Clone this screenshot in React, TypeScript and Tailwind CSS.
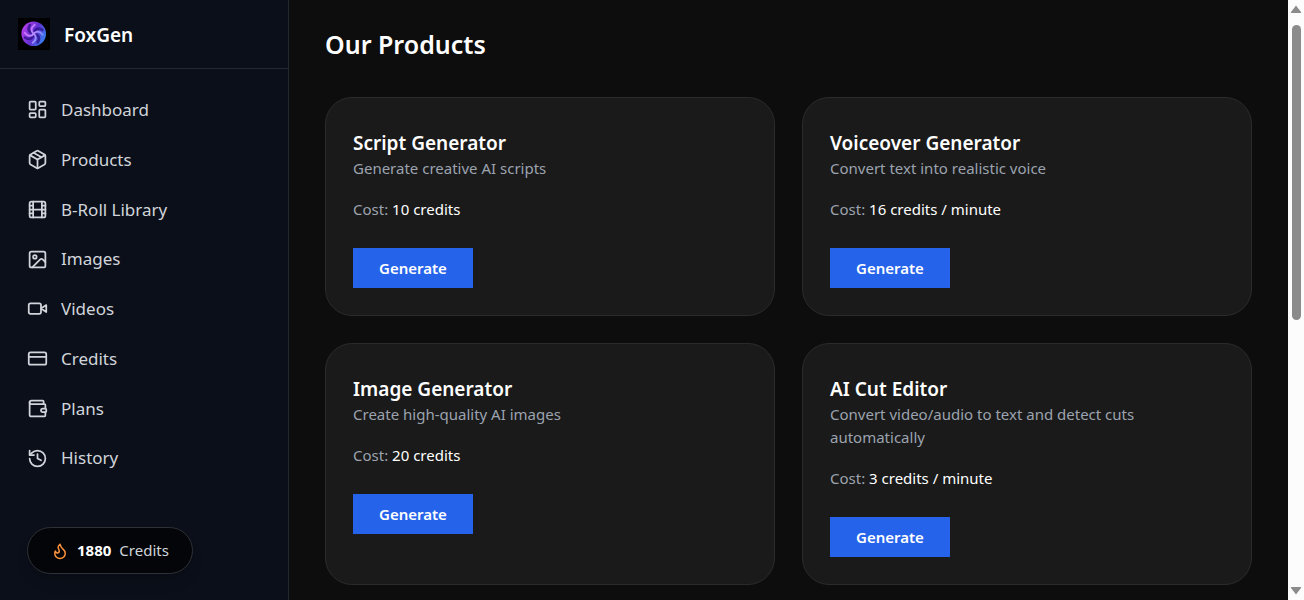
import {
  CreditCard,
  Film,
  Flame,
  History,
  Image,
  LayoutDashboard,
  Package,
  Wallet,
} from "lucide-react";

// Camera with a pointed lens
const VideoIcon = ({ size = 24 }: { size?: number }) => (
  <svg width={size} height={size} viewBox="0 0 24 24" fill="none" stroke="currentColor" strokeWidth="2" strokeLinecap="round" strokeLinejoin="round" aria-hidden="true">
    <path d="m22 8-6 4 6 4V8Z" />
    <rect x="2" y="6" width="14" height="12" rx="2" />
  </svg>
);

const links = [
  { name: "Dashboard", href: "#dashboard", icon: LayoutDashboard },
  { name: "Products", href: "#products", icon: Package },
  { name: "B-Roll Library", href: "#b-roll", icon: Film },
  { name: "Images", href: "#images", icon: Image },
  { name: "Videos", href: "#videos", icon: VideoIcon },
  { name: "Credits", href: "#credits", icon: CreditCard },
  { name: "Plans", href: "#plans", icon: Wallet },
  { name: "History", href: "#history", icon: History },
];

const products = [
  { title: "Script Generator", description: "Generate creative AI scripts", cost: "10 credits" },
  { title: "Voiceover Generator", description: "Convert text into realistic voice", cost: "16 credits / minute" },
  { title: "Image Generator", description: "Create high-quality AI images", cost: "20 credits" },
  { title: "AI Cut Editor", description: "Convert video/audio to text and detect cuts automatically", cost: "3 credits / minute" },
];

const Logo = () => (
  <svg viewBox="0 0 32 32" className="size-8 bg-black" aria-hidden="true">
    <defs>
      <linearGradient id="orb" x1="0" y1="0.3" x2="1" y2="0.8">
        <stop offset="0" stopColor="#b93fec" />
        <stop offset="0.5" stopColor="#6330d0" />
        <stop offset="1" stopColor="#2f8cf5" />
      </linearGradient>
      <linearGradient id="arm" gradientUnits="userSpaceOnUse" x1="4" y1="10" x2="28" y2="22">
        <stop offset="0" stopColor="#d966ff" />
        <stop offset="0.5" stopColor="#b48cff" />
        <stop offset="1" stopColor="#4f95ff" />
      </linearGradient>
    </defs>
    <circle cx="15.7" cy="15.7" r="12.3" fill="url(#orb)" />
    <g fill="none" strokeLinecap="round">
      <g stroke="#2a1085" strokeWidth="2.6" opacity="0.75">
        <path d="M15 15c-4 0-6-4-3-8" />
        <path d="M16.5 15c0-4 4-6 8-3" />
        <path d="M16.5 16.5c4 0 6 4 3 8" />
        <path d="M15 16.5c0 4-4 6-8 3" />
      </g>
      <g stroke="url(#arm)" strokeWidth="1.8">
        <path d="M15.7 15.7c-3-2-3-6 1-9" />
        <path d="M15.7 15.7c2-3 6-3 9 1" />
        <path d="M15.7 15.7c3 2 3 6-1 9" />
        <path d="M15.7 15.7c-2 3-6 3-9-1" />
      </g>
    </g>
  </svg>
);

const Sidebar = () => (
  <aside className="flex w-[289px] shrink-0 flex-col border-r border-[#22262f] bg-[#0b0f19]">
    <div className="flex items-center gap-3.5 border-b border-[#22262f] p-[18px]">
      <Logo />
      <span className="pt-0.5 text-[19px] leading-7 font-semibold text-white">FoxGen</span>
    </div>

    <nav className="flex flex-1 flex-col px-[27px] pt-4">
      {links.map(({ name, href, icon: Icon }) => (
        <a key={name} href={href} className="flex flex-1 items-center gap-[13px] text-[17px] text-[#d1d5db]">
          <Icon size={21} />
          {name}
        </a>
      ))}
    </nav>

    <div className="px-[27px] pt-11 pb-[26px]">
      <div className="inline-flex h-[47px] items-center gap-2 rounded-full border border-[#303136] bg-[#040508] px-[23px] text-[15px] shadow-lg">
        <Flame size={18} className="text-[#fb923c]" />
        <span className="font-bold text-white">1880</span>
        <span className="text-[#d1d5db]">Credits</span>
      </div>
    </div>
  </aside>
);

const ProductCard = ({ title, description, cost }: (typeof products)[number]) => (
  <article className="rounded-[27px] border border-[#2b2b2b] bg-[#1a1a1a] px-[27px] pt-[31px] pb-[27px]">
    <h2 className="text-[19px] leading-7 font-semibold text-white">{title}</h2>
    <p className="max-w-[340px] text-[15px] leading-[23px] text-[#9ca3af]">{description}</p>
    <p className="mt-[18px] text-[15px] leading-[23px] text-[#9ca3af]">
      Cost: <span className="text-white">{cost}</span>
    </p>
    <button type="button" className="mt-[27px] h-10 bg-[#2563eb] px-[26px] text-[15px] font-semibold text-white">
      Generate
    </button>
  </article>
);

const ScrollTrack = () => (
  <div className="flex w-4 shrink-0 flex-col items-center bg-[#fcfcfc] py-[5px]" aria-hidden="true">
    <svg width="12" height="8" viewBox="0 0 12 8" fill="#8b8b8b">
      <path d="M6 0.5 11 7a.6.6 0 0 1-.5 1h-9A.6.6 0 0 1 1 7z" />
    </svg>
    <div className="mt-3 h-1/2 w-[9px] rounded-full bg-[#8b8b8b]" />
    <svg width="12" height="8" viewBox="0 0 12 8" fill="#8b8b8b" className="mt-auto">
      <path d="M6 7.5 11 1a.6.6 0 0 0-.5-1h-9A.6.6 0 0 0 1 1z" />
    </svg>
  </div>
);

export default function App() {
  return (
    <div className="flex min-h-screen bg-[#0d0d0d] font-['Noto_Sans',sans-serif]">
      <Sidebar />
      <main className="flex-1 px-9 pt-[26px]">
        <h1 className="text-[25px] leading-9 font-semibold text-white">Our Products</h1>
        <div className="mt-[35px] grid grid-cols-2 gap-[27px]">
          {products.map((product) => (
            <ProductCard key={product.title} {...product} />
          ))}
        </div>
      </main>
      <ScrollTrack />
    </div>
  );
}
